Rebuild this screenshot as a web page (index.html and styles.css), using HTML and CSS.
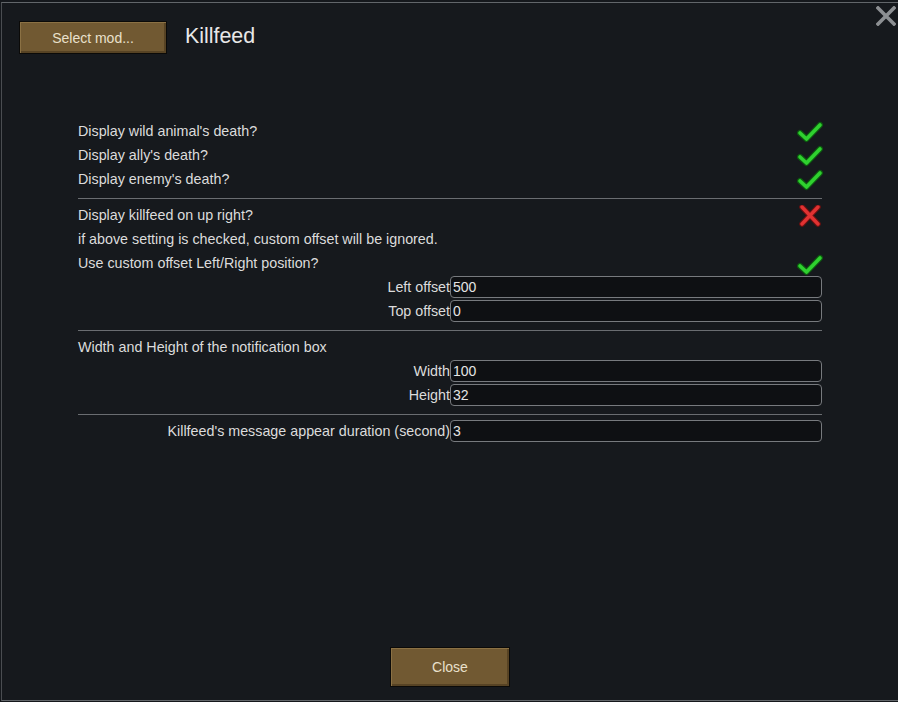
FILE: index.html
```html
<!DOCTYPE html>
<html>
<head>
<meta charset="utf-8">
<link rel="stylesheet" href="styles.css">
</head>
<body>
<div class="window">
  <div class="close-x">
    <svg width="20" height="20" viewBox="0 0 20 20"><path d="M2 2 L18 18 M18 2 L2 18" stroke="#8c8f92" stroke-width="3.6" stroke-linecap="square"/></svg>
  </div>
  <div class="header">
    <button class="btn btn-select">Select mod...</button>
    <div class="title">Killfeed</div>
  </div>
  <div class="settings">
    <div class="row"><span class="label">Display wild animal's death?</span><span class="icon check"><svg width="26" height="22" viewBox="0 0 26 22"><path d="M3 12 L9.5 18 L23 4" fill="none" stroke="#0d5a10" stroke-width="6" stroke-linecap="round" stroke-linejoin="round"/><path d="M3 12 L9.5 18 L23 4" fill="none" stroke="#2fd12f" stroke-width="3.6" stroke-linecap="round" stroke-linejoin="round"/></svg></span></div>
    <div class="row"><span class="label">Display ally's death?</span><span class="icon check"><svg width="26" height="22" viewBox="0 0 26 22"><path d="M3 12 L9.5 18 L23 4" fill="none" stroke="#0d5a10" stroke-width="6" stroke-linecap="round" stroke-linejoin="round"/><path d="M3 12 L9.5 18 L23 4" fill="none" stroke="#2fd12f" stroke-width="3.6" stroke-linecap="round" stroke-linejoin="round"/></svg></span></div>
    <div class="row"><span class="label">Display enemy's death?</span><span class="icon check"><svg width="26" height="22" viewBox="0 0 26 22"><path d="M3 12 L9.5 18 L23 4" fill="none" stroke="#0d5a10" stroke-width="6" stroke-linecap="round" stroke-linejoin="round"/><path d="M3 12 L9.5 18 L23 4" fill="none" stroke="#2fd12f" stroke-width="3.6" stroke-linecap="round" stroke-linejoin="round"/></svg></span></div>
    <div class="divider"></div>
    <div class="row"><span class="label">Display killfeed on up right?</span><span class="icon cross"><svg width="26" height="22" viewBox="0 0 26 22"><path d="M5 2 L21 19 M21 2 L5 19" fill="none" stroke="#6a1010" stroke-width="5.6" stroke-linecap="round"/><path d="M5 2 L21 19 M21 2 L5 19" fill="none" stroke="#e03232" stroke-width="3.4" stroke-linecap="round"/></svg></span></div>
    <div class="row"><span class="label">if above setting is checked, custom offset will be ignored.</span></div>
    <div class="row"><span class="label">Use custom offset Left/Right position?</span><span class="icon check low"><svg width="26" height="22" viewBox="0 0 26 22"><path d="M3 12 L9.5 18 L23 4" fill="none" stroke="#0d5a10" stroke-width="6" stroke-linecap="round" stroke-linejoin="round"/><path d="M3 12 L9.5 18 L23 4" fill="none" stroke="#2fd12f" stroke-width="3.6" stroke-linecap="round" stroke-linejoin="round"/></svg></span></div>
    <div class="field"><span class="flabel">Left offset</span><div class="input">500</div></div>
    <div class="field"><span class="flabel">Top offset</span><div class="input">0</div></div>
    <div class="divider"></div>
    <div class="row"><span class="label">Width and Height of the notification box</span></div>
    <div class="field"><span class="flabel">Width</span><div class="input">100</div></div>
    <div class="field"><span class="flabel">Height</span><div class="input">32</div></div>
    <div class="divider"></div>
    <div class="field"><span class="flabel">Killfeed's message appear duration (second)</span><div class="input">3</div></div>
  </div>
  <div class="footer">
    <button class="btn btn-close">Close</button>
  </div>
</div>
</body>
</html>
```
FILE: styles.css
```css
html, body {
  margin: 0;
  padding: 0;
  background: #15181c;
  font-family: "Liberation Sans", Arial, sans-serif;
  color: #dcdcdc;
}
body {
  width: 898px;
  height: 702px;
  overflow: hidden;
}
.window {
  position: relative;
  margin: 2px 0 0 1px;
  height: 697px;
  border-top: 1px solid #62666a;
  border-left: 1px solid #4a4d51;
  border-bottom: 1px solid #62666a;
  background: #16191d;
  display: flex;
  flex-direction: column;
}
.close-x {
  position: absolute;
  top: 3px;
  right: 0px;
  width: 22px;
  height: 20px;
}
.header {
  display: flex;
  align-items: center;
  padding: 18px 0 0 17px;
  height: 33px;
}
.btn {
  font-family: "Liberation Sans", Arial, sans-serif;
  background: #715932;
  border: 1px solid #0b0a08;
  box-shadow: inset 1px 1px 0 #8b7144, inset -2px -2px 0 #574324;
  color: #e9e0cc;
  padding: 0;
  cursor: pointer;
}
.btn-select {
  width: 148px;
  height: 33px;
  font-size: 14px;
}
.title {
  margin-left: 18px;
  font-size: 21.4px;
  color: #e8e8e8;
  margin-top: -3px;
}
.settings {
  margin: 65px 0 0 76px;
  width: 744px;
  display: flex;
  flex-direction: column;
}
.row {
  height: 24px;
  display: flex;
  align-items: center;
  justify-content: space-between;
  font-size: 14.3px;
}
.icon {
  width: 26px;
  height: 22px;
  margin-right: -1px;
}
.icon svg { display: block; }
.check { margin-top: 1px; }
.check.low { margin-top: 4px; }
.cross { margin-top: 1px; }
.divider {
  height: 1px;
  background: #6a6d71;
  margin: 7px 0 4px;
}
.field {
  height: 24px;
  display: grid;
  grid-template-columns: 372px 372px;
  align-items: center;
  font-size: 14.3px;
}
.flabel {
  text-align: right;
}
.input {
  height: 20px;
  line-height: 20px;
  border: 1px solid #777a7e;
  border-radius: 4px;
  background: #0e1013;
  padding-left: 2px;
  color: #e4e4e4;
  font-size: 14px;
}
.footer {
  margin-top: auto;
  display: flex;
  justify-content: center;
  padding: 0 0 13px 0;
}
.btn-close {
  width: 120px;
  height: 40px;
  font-size: 14px;
}
```
